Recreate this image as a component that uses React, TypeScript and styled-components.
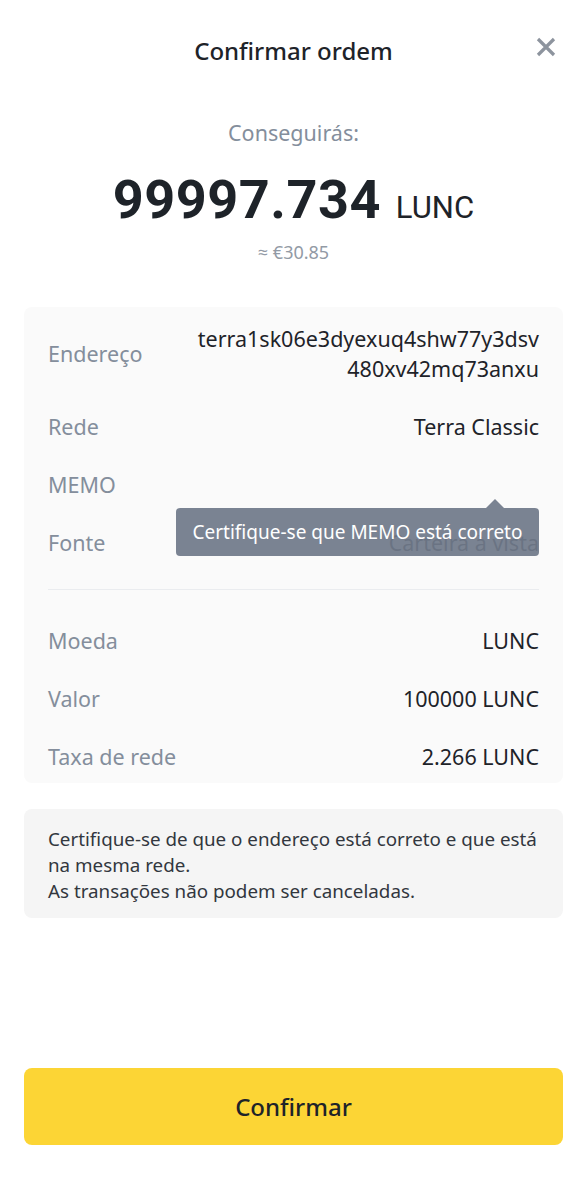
import styled, { createGlobalStyle } from 'styled-components';

const GlobalStyle = createGlobalStyle`
  body {
    margin: 0;
    background: #fff;
    font-family: "Noto Sans", "Open Sans", sans-serif;
    color: #1e2329;
  }
  * { box-sizing: border-box; }
`;

const App = () => {
  return (
    <Page>
      <GlobalStyle />
      <Header>
        <Title>Confirmar ordem</Title>
        <Close aria-label="fechar">
          <svg width="22" height="22" viewBox="0 0 22 22">
            <path d="M3 3 L19 19 M19 3 L3 19" stroke="#8d949e" strokeWidth="3.2" strokeLinecap="butt" />
          </svg>
        </Close>
      </Header>

      <Summary>
        <Caption>Conseguirás:</Caption>
        <AmountLine>
          <Amount>99997.734</Amount>
          <Unit>LUNC</Unit>
        </AmountLine>
        <Fiat>≈ €30.85</Fiat>
      </Summary>

      <Card>
        <Group>
          <Row>
            <Label>Endereço</Label>
            <Value>
              terra1sk06e3dyexuq4shw77y3dsv
              <br />
              480xv42mq73anxu
            </Value>
          </Row>
          <Row>
            <Label>Rede</Label>
            <Value>Terra Classic</Value>
          </Row>
          <Row $anchor>
            <Label>MEMO</Label>
            <Value></Value>
            <Tooltip>Certifique-se que MEMO está correto</Tooltip>
          </Row>
          <Row>
            <Label>Fonte</Label>
            <Value>Carteira à vista</Value>
          </Row>
        </Group>
        <Divider />
        <Group>
          <Row>
            <Label>Moeda</Label>
            <Value>LUNC</Value>
          </Row>
          <Row>
            <Label>Valor</Label>
            <Value>100000 LUNC</Value>
          </Row>
          <Row>
            <Label>Taxa de rede</Label>
            <Value>2.266 LUNC</Value>
          </Row>
        </Group>
      </Card>

      <Notice>
        Certifique-se de que o endereço está correto e que está na mesma rede.
        <br />
        As transações não podem ser canceladas.
      </Notice>

      <ConfirmButton>Confirmar</ConfirmButton>
    </Page>
  );
};

export default App;

const Page = styled.div`
  width: 587px;
  min-height: 1200px;
  padding: 0 24px;
  display: flex;
  flex-direction: column;
`;
const Header = styled.div`
  position: relative;
  height: 100px;
  display: flex;
  align-items: center;
  justify-content: center;
`;
const Title = styled.h1`
  margin: 0;
  font-size: 24px;
  font-weight: 500;
  color: #1e2329;
`;
const Close = styled.button`
  position: absolute;
  right: 6px;
  top: 36px;
  padding: 0;
  border: 0;
  background: none;
  width: 22px;
  height: 22px;
  display: flex;
`;
const Summary = styled.div`
  display: flex;
  flex-direction: column;
  align-items: center;
  padding-top: 18px;
`;
const Caption = styled.div`
  font-size: 21.5px;
  line-height: 30px;
  color: #848e9c;
`;
const AmountLine = styled.div`
  display: flex;
  align-items: baseline;
  gap: 15px;
  margin-top: 27px;
  height: 50px;
`;
const Amount = styled.span`
  font-family: Roboto, "Noto Sans", sans-serif;
  font-size: 54px;
  font-weight: 700;
  line-height: 50px;
  letter-spacing: 0.5px;
  color: #1e2329;
`;
const Unit = styled.span`
  font-family: Roboto, "Noto Sans", sans-serif;
  font-size: 31px;
  font-weight: 400;
  color: #1e2329;
`;
const Fiat = styled.div`
  margin-top: 16px;
  font-size: 18px;
  line-height: 22px;
  color: #929aa5;
`;
const Card = styled.div`
  margin-top: 44px;
  background: #fafafa;
  border-radius: 8px;
  padding: 17px 24px 11px;
`;
const Group = styled.div`
  display: flex;
  flex-direction: column;
  gap: 28px;
`;
const Row = styled.div<{ $anchor?: boolean }>`
  display: flex;
  justify-content: space-between;
  align-items: center;
  gap: 16px;
  min-height: 30px;
  position: ${(p) => (p.$anchor ? 'relative' : 'static')};
`;
const Label = styled.div`
  font-size: 21.5px;
  line-height: 30px;
  color: #848e9c;
  white-space: nowrap;
`;
const Value = styled.div`
  font-size: 21.5px;
  line-height: 30px;
  color: #1e2329;
  text-align: right;
`;
const Tooltip = styled.div`
  position: absolute;
  top: 38px;
  right: 0;
  width: 363px;
  height: 48px;
  border-radius: 4px;
  background: rgba(112, 122, 138, 0.93);
  color: #fff;
  font-size: 19px;
  display: flex;
  align-items: center;
  justify-content: center;
  z-index: 2;

  &::before {
    content: '';
    position: absolute;
    top: -9px;
    right: 35px;
    border-left: 9px solid transparent;
    border-right: 9px solid transparent;
    border-bottom: 9px solid rgba(112, 122, 138, 0.93);
  }
`;
const Divider = styled.hr`
  margin: 31px 0 36px;
  border: 0;
  border-top: 1px solid #eaecef;
`;
const Notice = styled.div`
  margin-top: 26px;
  background: #f5f5f5;
  border-radius: 8px;
  padding: 17px 24px 14px;
  font-size: 18.8px;
  line-height: 26px;
  color: #32373e;
`;
const ConfirmButton = styled.button`
  margin-top: 150px;
  height: 77px;
  width: 100%;
  border: 0;
  border-radius: 8px;
  background: #fcd535;
  font-family: "Noto Sans", sans-serif;
  font-size: 24px;
  font-weight: 500;
  color: #1e2329;
`;
